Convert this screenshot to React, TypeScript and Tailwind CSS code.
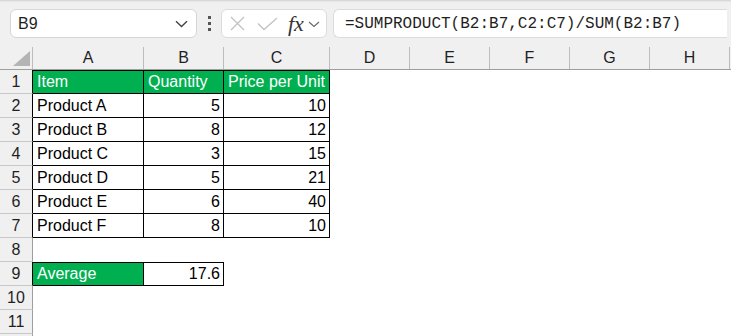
import React from 'react'

const COLS = [
  { key: 'A', w: 'w-[111px]' },
  { key: 'B', w: 'w-[80px]' },
  { key: 'C', w: 'w-[106px]' },
  { key: 'D', w: 'w-[80px]' },
  { key: 'E', w: 'w-[80px]' },
  { key: 'F', w: 'w-[80px]' },
  { key: 'G', w: 'w-[80px]' },
  { key: 'H', w: 'w-[80px]' },
]

type Cell = { text?: string; align?: 'left' | 'right'; green?: boolean }

const rows: Cell[][] = [
  [{ text: 'Item', green: true }, { text: 'Quantity', green: true }, { text: 'Price per Unit', green: true }],
  [{ text: 'Product A' }, { text: '5', align: 'right' }, { text: '10', align: 'right' }],
  [{ text: 'Product B' }, { text: '8', align: 'right' }, { text: '12', align: 'right' }],
  [{ text: 'Product C' }, { text: '3', align: 'right' }, { text: '15', align: 'right' }],
  [{ text: 'Product D' }, { text: '5', align: 'right' }, { text: '21', align: 'right' }],
  [{ text: 'Product E' }, { text: '6', align: 'right' }, { text: '40', align: 'right' }],
  [{ text: 'Product F' }, { text: '8', align: 'right' }, { text: '10', align: 'right' }],
  [],
  [{ text: 'Average', green: true }, { text: '17.6', align: 'right' }],
  [],
  [],
]

const FormulaBar = () => (
  <div className="flex h-[47px] items-start bg-[#f0f0f0] pt-[9px] shadow-[inset_0_3px_2px_-2px_#d0d0d0]">
    {/* name box */}
    <div className="ml-[10px] flex h-[29px] w-[187px] items-center justify-between rounded-[6px] border border-[#d6d6d6] bg-white pl-[7px] pr-[8px]">
      <span className="text-[16px] text-[#1f1f1f]">B9</span>
      <svg width="13" height="8" viewBox="0 0 13 8" fill="none">
        <path d="M1 1.2 6.5 6.5 12 1.2" stroke="#444" strokeWidth="1.4" />
      </svg>
    </div>
    {/* dots */}
    <div className="ml-[11px] flex h-[29px] flex-col items-center justify-center gap-[3px]">
      <span className="h-[3px] w-[3px] bg-[#555]" />
      <span className="h-[3px] w-[3px] bg-[#555]" />
      <span className="h-[3px] w-[3px] bg-[#555]" />
    </div>
    {/* cancel / enter / fx */}
    <div className="ml-[10px] flex h-[29px] w-[106px] items-center rounded-[6px] border border-[#dcdcdc] bg-white pl-[8px]">
      <svg width="15" height="15" viewBox="0 0 15 15" fill="none">
        <path d="M1 1 14 14M14 1 1 14" stroke="#c2c2c2" strokeWidth="1.3" />
      </svg>
      <svg className="ml-[12px]" width="21" height="14" viewBox="0 0 21 14" fill="none">
        <path d="M1 6.5 7 12.5 20 1" stroke="#c2c2c2" strokeWidth="1.3" />
      </svg>
      <span className="ml-[10px] font-['Liberation_Serif',serif] text-[22px] italic leading-none text-[#333]">fx</span>
      <svg className="ml-[4px] mt-[2px]" width="12" height="7" viewBox="0 0 12 7" fill="none">
        <path d="M1 1 6 5.5 11 1" stroke="#666" strokeWidth="1.1" />
      </svg>
    </div>
    {/* formula */}
    <div className="ml-[6px] flex h-[29px] w-[394px] items-center rounded-l-[6px] border border-r-0 border-[#dcdcdc] bg-white pl-[11px]">
      <span className="font-['Liberation_Mono',monospace] text-[16px] text-[#1f1f1f]">=SUMPRODUCT(B2:B7,C2:C7)/SUM(B2:B7)</span>
    </div>
  </div>
)

export default function App() {
  return (
    <div className="h-[336px] w-[731px] overflow-hidden bg-white font-['Liberation_Sans',Arial,sans-serif] text-[16px] text-black">
      <FormulaBar />
      {/* column headers */}
      <div className="flex h-[23px] border-b border-[#9e9e9e] bg-[#f0f0f0]">
        <div className="relative w-[33px] border-r border-[#bdbdbd]">
          <svg className="absolute bottom-[3px] right-[2px]" width="17" height="15" viewBox="0 0 17 15">
            <path d="M17 0V15H0Z" fill="#b4b4b4" />
          </svg>
        </div>
        {COLS.map(c => (
          <div key={c.key} className={`${c.w} flex items-center justify-center border-r border-[#bdbdbd] text-[16px] text-[#1f1f1f]`}>
            {c.key}
          </div>
        ))}
      </div>
      {rows.map((cells, i) => {
        const inTable = i < 7 || i === 8
        return (
          <div key={i} className="flex h-[24px]">
            <div
              className={`flex w-[33px] items-center justify-center border-b border-r border-b-[#c8c8c8] bg-[#f0f0f0] text-[16px] text-[#1f1f1f] ${
                inTable ? 'border-r-black' : 'border-r-[#9e9e9e]'
              }`}
            >
              {i + 1}
            </div>
            {COLS.map((c, j) => {
              const cell = cells[j]
              if (!cell) return <div key={c.key} className={c.w} />
              return (
                <div
                  key={c.key}
                  className={`${c.w} flex items-center overflow-hidden whitespace-nowrap border-b border-r border-black pl-[4px] pr-[3px] ${
                    i === 0 || i === 8 ? 'border-t' : ''
                  } ${cell.align === 'right' ? 'justify-end' : 'justify-start'} ${
                    cell.green ? 'bg-[#00b050] text-white' : 'bg-white'
                  }`}
                >
                  {cell.text}
                </div>
              )
            })}
          </div>
        )
      })}
      {/* partial row 12 */}
      <div className="flex h-[2px]">
        <div className="w-[33px] border-r border-[#9e9e9e] bg-[#f0f0f0]" />
      </div>
    </div>
  )
}
